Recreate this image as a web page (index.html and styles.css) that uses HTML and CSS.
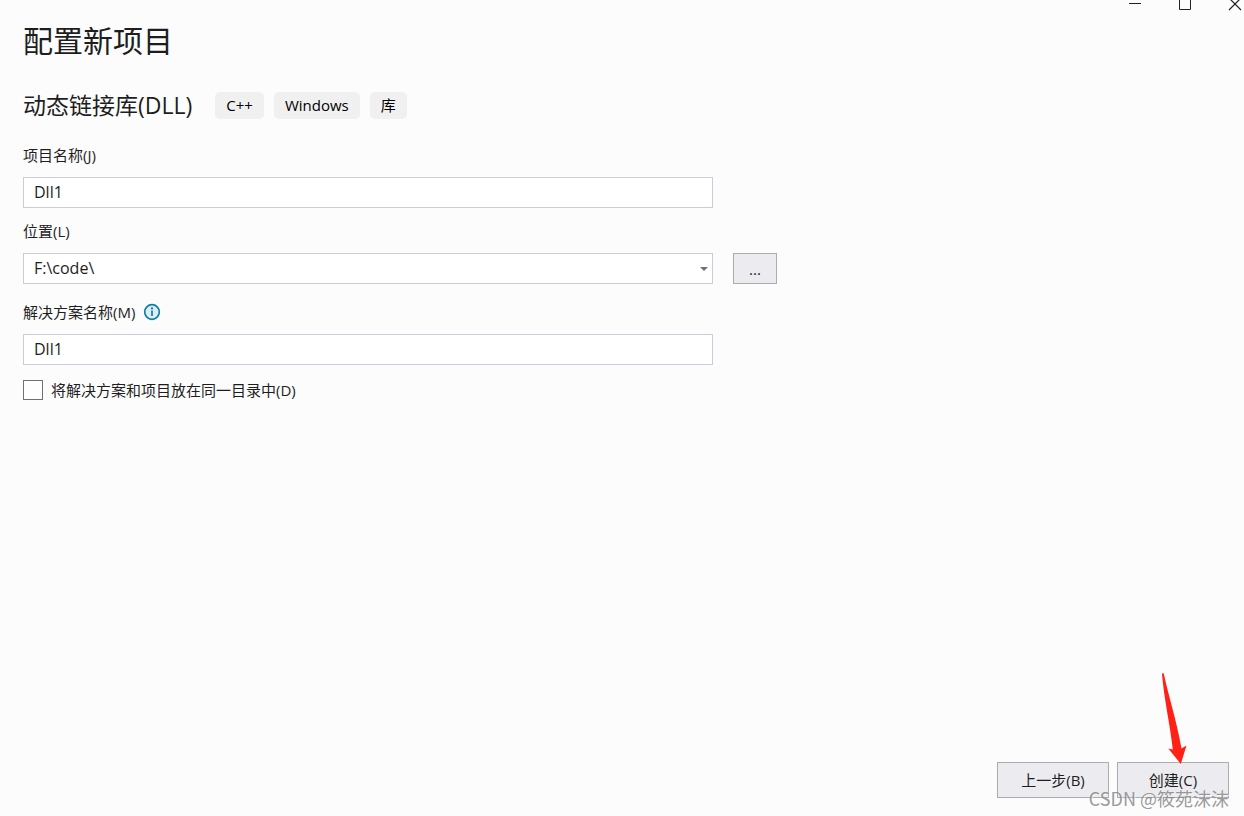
FILE: index.html
```html
<!DOCTYPE html>
<html lang="zh-CN">
<head>
<meta charset="utf-8">
<meta name="viewport" content="width=device-width, initial-scale=1">
<title>配置新项目</title>
<link rel="stylesheet" href="styles.css">
</head>
<body>
<div class="window">
  <header class="titlebar">
    <button class="caption-button" type="button" aria-label="最小化">
      <svg width="14" height="12" viewBox="0 0 14 12"><path d="M1 3.5H13" stroke="#222" fill="none"/></svg>
    </button>
    <button class="caption-button" type="button" aria-label="最大化">
      <svg width="14" height="12" viewBox="0 0 14 12"><path d="M1.5 -2V9.500H12.500V-2" stroke="#222" fill="none"/></svg>
    </button>
    <button class="caption-button" type="button" aria-label="关闭">
      <svg width="14" height="12" viewBox="0 0 14 12"><path d="M1 -2L13 10M13 -2L1 10" stroke="#222" stroke-width="1.2" fill="none"/></svg>
    </button>
  </header>

  <main class="content">
    <h1 class="title">配置新项目</h1>
    <div class="template">
      <h2 class="template-name">动态链接库(DLL)</h2>
      <ul class="tags">
        <li class="tag">C++</li>
        <li class="tag">Windows</li>
        <li class="tag">库</li>
      </ul>
    </div>

    <form class="form" id="project-form">
      <div class="field">
        <label class="label" for="project-name">项目名称(J)</label>
        <input class="textbox" id="project-name" type="text" value="Dll1">
      </div>
      <div class="field">
        <label class="label" for="location">位置(L)</label>
        <div class="location-row">
          <div class="combo">
            <select class="textbox combo-select" id="location"><option>F:\code\</option></select>
            <svg class="combo-arrow" width="8" height="4" viewBox="0 0 8 4" aria-hidden="true"><path d="M0 0H8L4 4Z" fill="#717171"/></svg>
          </div>
          <button class="button browse" type="button">...</button>
        </div>
      </div>
      <div class="field field-solution">
        <div class="label-row">
          <label class="label" for="solution-name">解决方案名称(M)</label>
          <svg class="info" width="18" height="18" viewBox="0 0 18 18" role="img" aria-label="信息">
            <circle cx="9" cy="9" r="7.3" fill="#deedf1" stroke="#0f7fa5" stroke-width="1.7"/>
            <path d="M9 7.500V13" stroke="#0f7fa5" stroke-width="1.7"/>
            <circle cx="9" cy="5.400" r="1.100" fill="#0f7fa5"/>
          </svg>
        </div>
        <input class="textbox" id="solution-name" type="text" value="Dll1">
      </div>
      <div class="check-row">
        <input class="checkbox" id="same-directory" type="checkbox">
        <label class="label" for="same-directory">将解决方案和项目放在同一目录中(D)</label>
      </div>
    </form>
  </main>

  <footer class="footer">
    <button class="button action" type="button">上一步(B)</button>
    <button class="button action" type="submit" form="project-form">创建(C)</button>
    <svg class="pointer-arrow" width="26" height="92" viewBox="0 0 26 92" aria-hidden="true"><path d="M1 2Q2 0 3 2.500C7 22 15 46 20.500 76.500L25.500 73.500L19.800 92L7.300 76.500L11.800 77.500C9 52 3.200 28 1 2Z" fill="#ff2116"/></svg>
    <span class="watermark">CSDN @筱苑沫沫</span>
  </footer>
</div>
</body>
</html>
```
FILE: styles.css
```css
* {
  box-sizing: border-box;
}

body {
  margin: 0;
  background: #fcfcfc;
  color: #1e1e1e;
  font: 15px/20px "Open Sans", "Noto Sans CJK SC", sans-serif;
}

button,
input,
select {
  font: inherit;
  color: inherit;
}

.window {
  display: flex;
  flex-direction: column;
  min-height: 100vh;
}

.titlebar {
  display: flex;
  justify-content: flex-end;
  gap: 36px;
  height: 12px;
  padding-right: 2px;
}

.caption-button {
  display: flex;
  padding: 0;
  border: 0;
  background: none;
}

.content {
  flex: 1;
  padding: 9px 23px 0;
}

.title {
  margin: 0;
  font-size: 30px;
  font-weight: 400;
  line-height: 40px;
}

.template {
  display: flex;
  align-items: center;
  gap: 23px;
  margin-top: 31px;
}

.template-name {
  margin: 0;
  font-size: 23px;
  font-weight: 400;
  line-height: 27px;
}

.tags {
  display: flex;
  gap: 10px;
  margin: 0;
  padding: 0;
  list-style: none;
}

.tag {
  padding: 0 11px;
  border-radius: 5px;
  background: #f0f0f0;
  color: #000;
  line-height: 27px;
}

.form {
  display: flex;
  flex-direction: column;
  gap: 13px;
  margin-top: 26px;
}

.field {
  display: flex;
  flex-direction: column;
  gap: 12px;
}

.field-solution {
  margin-top: 5px;
}

.label-row {
  display: flex;
  align-items: center;
  gap: 8px;
}

.textbox {
  width: 100%;
  max-width: 690px;
  height: 31px;
  padding: 0 10px 2px;
  border: 1px solid #ccccdd;
  border-radius: 0;
  background: #fff;
  font-size: 16px;
}

.location-row {
  display: flex;
  gap: 20px;
}

.combo {
  position: relative;
  flex: 0 1 690px;
}

.combo-select {
  display: block;
  appearance: none;
}

.combo-arrow {
  position: absolute;
  top: 14px;
  right: 5px;
  pointer-events: none;
}

.button {
  border: 1px solid #acacac;
  border-radius: 0;
  background: #ececf0;
}

.browse {
  width: 44px;
  padding: 0;
}

.check-row {
  display: flex;
  align-items: center;
  gap: 8px;
  margin-top: 2px;
}

.checkbox {
  appearance: none;
  width: 20px;
  height: 20px;
  margin: 0;
  border: 1px solid #717171;
  background: #fefefe;
}

.checkbox:checked {
  background: #717171;
}

.footer {
  position: relative;
  display: flex;
  justify-content: flex-end;
  gap: 8px;
  padding: 0 15px 18px;
}

.action {
  width: 112px;
  height: 36px;
  padding: 0;
}

.pointer-arrow {
  position: absolute;
  right: 57px;
  bottom: 52px;
}

.watermark {
  position: absolute;
  right: 15px;
  bottom: 6px;
  color: #808080cc;
  font: 18px/24px "Noto Sans CJK SC", sans-serif;
  text-shadow: 1px 1px 0 #ffffff99;
  white-space: nowrap;
  pointer-events: none;
}
```
